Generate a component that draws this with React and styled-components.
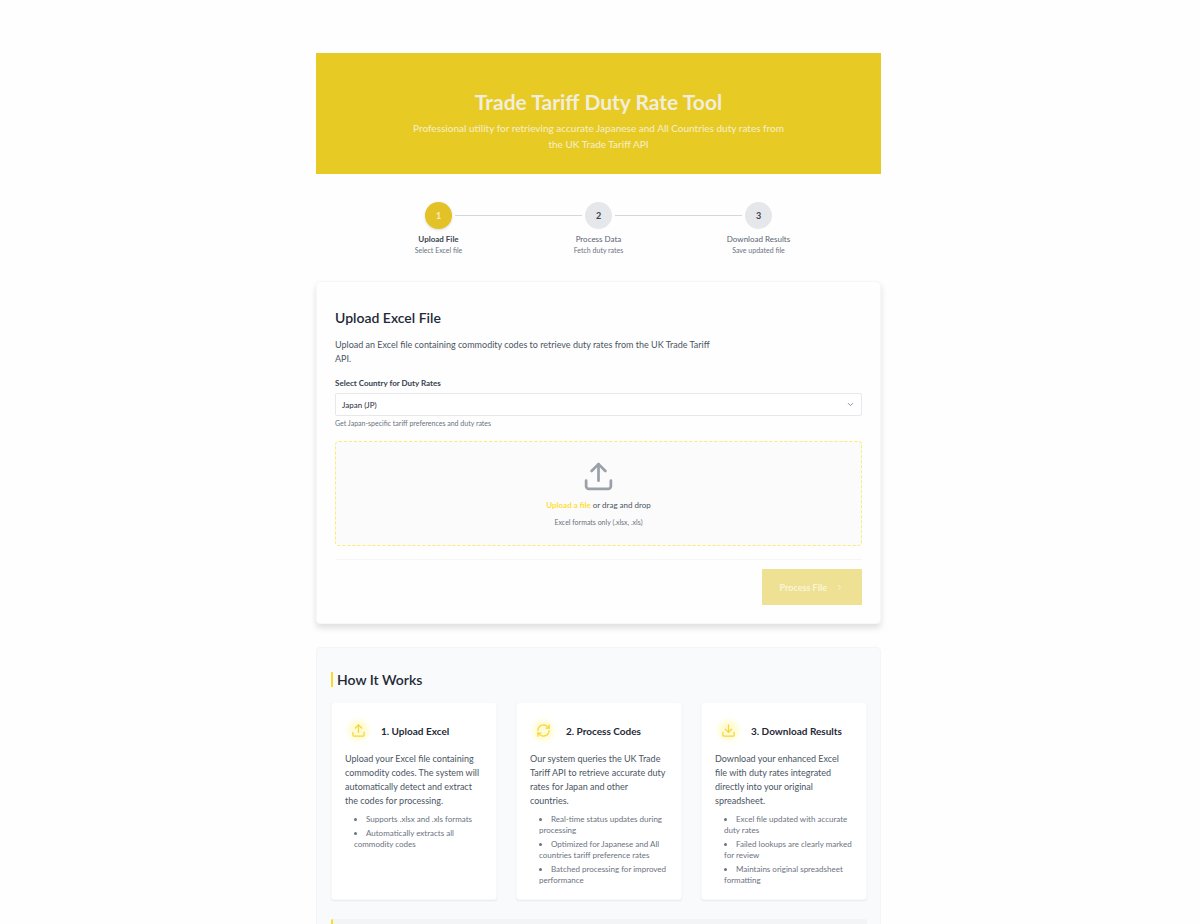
import React, { useState } from "react";
import styled, { createGlobalStyle, css } from "styled-components";
import {
  ChevronDown,
  ChevronRight,
  Download,
  RefreshCw,
  Upload,
} from "lucide-react";

const GlobalStyle = createGlobalStyle`
  *, *::before, *::after { box-sizing: border-box; }
  body {
    margin: 0;
    background: #fefefe;
    color: #1f2937;
    font-family: Lato, "Open Sans", sans-serif;
  }
  h1, h2, h3, p, ul, ol { margin: 0; padding: 0; }
`;

const Page = styled.main`
  padding: 53px 3px 0 0;
`;

const Container = styled.div`
  max-width: 565px;
  margin: 0 auto;
`;

const Banner = styled.header`
  background: #e8ca25;
  color: #f2eedd;
  padding: 36px 88px 22px;
  text-align: center;
`;

const BannerTitle = styled.h1`
  font-size: 21px;
  line-height: 26px;
  font-weight: 700;
  margin-bottom: 5px;
`;

const BannerText = styled.p`
  font-size: 10px;
  line-height: 16px;
  font-weight: 500;
  color: #f4edc4;
`;

const Steps = styled.ol`
  display: flex;
  list-style: none;
  justify-content: center;
  margin: 28px 42px 26px;
`;

const Step = styled.li`
  flex: 1;
  max-width: 160px;
  display: flex;
  flex-direction: column;
  align-items: center;
`;

const StepTrack = styled.div`
  align-self: stretch;
  display: flex;
  align-items: center;
  gap: 3px;
`;

const StepLine = styled.span`
  flex: 1;
  height: 1px;
  background: ${(p) => (p.$hidden ? "transparent" : "#d5d6d9")};
`;

const StepCircle = styled.span`
  width: 27px;
  height: 27px;
  border-radius: 50%;
  display: flex;
  align-items: center;
  justify-content: center;
  font-size: 9px;
  font-weight: 700;
  background: #e6e7ea;
  color: #3b4350;
  ${(p) =>
    p.$active &&
    css`
      background: #e3c228;
      color: #f6edc0;
      box-shadow: 0 1px 3px rgba(0, 0, 0, 0.15);
    `}
`;

const StepName = styled.span`
  margin-top: 4px;
  font-size: 8px;
  line-height: 12px;
  font-weight: ${(p) => (p.$active ? 700 : 400)};
  color: ${(p) => (p.$active ? "#3b4350" : "#5b6370")};
`;

const StepHint = styled.span`
  font-size: 7px;
  line-height: 10px;
  color: #6b7280;
`;

const Card = styled.section`
  background: #fefefe;
  border: 1px solid #f6f7f8;
  border-radius: 4px;
  padding: 27px 18px 18px;
  box-shadow: 0 4px 6px rgba(0, 0, 0, 0.12);
`;

const CardTitle = styled.h2`
  font-size: 14px;
  line-height: 18px;
  font-weight: 600;
  color: #1f2937;
`;

const CardText = styled.p`
  margin-top: 11px;
  max-width: 390px;
  font-size: 9px;
  line-height: 14px;
  color: #4b5563;
`;

const Label = styled.label`
  display: block;
  margin: 11px 0 4px;
  font-size: 8px;
  line-height: 12px;
  font-weight: 700;
  color: #374151;
`;

const SelectWrap = styled.div`
  position: relative;

  svg {
    position: absolute;
    right: 7px;
    top: 7px;
    color: #6b7280;
    pointer-events: none;
  }
`;

const Select = styled.select`
  appearance: none;
  display: block;
  width: 100%;
  height: 23px;
  padding: 0 20px 0 6px;
  border: 1px solid #e6e8eb;
  border-radius: 2px;
  background: #fff;
  color: #1f2937;
  font-family: inherit;
  font-size: 8px;
`;

const Hint = styled.p`
  margin-top: 2px;
  font-size: 7px;
  line-height: 11px;
  color: #6b7280;
`;

const DropZone = styled.div`
  margin-top: 12px;
  padding: 18px 0 17px;
  border: 1px dashed #fdec6e;
  border-radius: 4px;
  background: #fbfbfb;
  display: flex;
  flex-direction: column;
  align-items: center;
  color: #9ca0aa;
`;

const DropText = styled.p`
  margin-top: 5px;
  font-size: 8px;
  line-height: 14px;
  color: #4b5563;
`;

const UploadButton = styled.button`
  border: 0;
  padding: 0;
  background: none;
  font: inherit;
  font-weight: 700;
  color: #ffdf35;
  cursor: pointer;
`;

const DropHint = styled.p`
  margin-top: 4px;
  font-size: 7px;
  line-height: 12px;
  color: #6b7280;
`;

const CardFooter = styled.div`
  display: flex;
  justify-content: flex-end;
  margin-top: 13px;
  padding-top: 9px;
  border-top: 1px solid #f6f6f7;
`;

const ProcessButton = styled.button`
  display: flex;
  align-items: center;
  gap: 8px;
  height: 36px;
  padding: 0 18px;
  border: 0;
  border-radius: 1px;
  background: #efe193;
  color: #faf5d8;
  font-family: inherit;
  font-size: 9px;
  font-weight: 700;
`;

const HowSection = styled.section`
  margin-top: 23px;
  padding: 24px 13px 20px 14px;
  border: 1px solid #f3f5f7;
  border-radius: 4px;
  background: #f9fafc;
`;

const HowTitle = styled.h2`
  border-left: 2px solid #fadb2a;
  padding-left: 4px;
  font-size: 14px;
  line-height: 15px;
  font-weight: 600;
  color: #1f2937;
`;

const HowGrid = styled.div`
  display: grid;
  grid-template-columns: repeat(3, 1fr);
  gap: 19px;
  margin-top: 15px;
`;

const HowCard = styled.article`
  padding: 14px 13px 13px;
  border: 1px solid #f8f9fa;
  border-radius: 3px;
  background: #fff;
  box-shadow: 0 1px 2px rgba(0, 0, 0, 0.07);
`;

const HowHead = styled.div`
  display: flex;
  align-items: center;
  gap: 9px;
`;

const IconBadge = styled.span`
  width: 27px;
  height: 27px;
  border-radius: 50%;
  display: flex;
  align-items: center;
  justify-content: center;
  background: radial-gradient(circle, #fefbd2 30%, #fffffa 70%);
  color: #f5d53a;
`;

const HowName = styled.h3`
  font-size: 10px;
  line-height: 14px;
  font-weight: 700;
  color: #1f2937;
`;

const HowText = styled.p`
  margin-top: 8px;
  font-size: 9px;
  line-height: 14px;
  color: #4b5563;
`;

const HowList = styled.ul`
  margin-top: 6px;
  padding-left: 9px;
  list-style: disc inside;
  font-size: 8px;
  line-height: 11px;
  color: #6b7280;

  li + li {
    margin-top: 3px;
  }
`;

const Note = styled.aside`
  margin-top: 19px;
  height: 60px;
  border-left: 2px solid #fadb2a;
  border-radius: 2px;
  background: #f3f4f6;
`;

const steps = [
  { name: "Upload File", hint: "Select Excel file" },
  { name: "Process Data", hint: "Fetch duty rates" },
  { name: "Download Results", hint: "Save updated file" },
];

const howItWorks = [
  {
    Icon: Upload,
    name: "1. Upload Excel",
    text: "Upload your Excel file containing commodity codes. The system will automatically detect and extract the codes for processing.",
    points: [
      "Supports .xlsx and .xls formats",
      "Automatically extracts all commodity codes",
    ],
  },
  {
    Icon: RefreshCw,
    name: "2. Process Codes",
    text: "Our system queries the UK Trade Tariff API to retrieve accurate duty rates for Japan and other countries.",
    points: [
      "Real-time status updates during processing",
      "Optimized for Japanese and All countries tariff preference rates",
      "Batched processing for improved performance",
    ],
  },
  {
    Icon: Download,
    name: "3. Download Results",
    text: "Download your enhanced Excel file with duty rates integrated directly into your original spreadsheet.",
    points: [
      "Excel file updated with accurate duty rates",
      "Failed lookups are clearly marked for review",
      "Maintains original spreadsheet formatting",
    ],
  },
];

const App = () => {
  const [country, setCountry] = useState("JP");
  const current = 0;

  return (
    <Page>
      <GlobalStyle />
      <Container>
        <Banner>
          <BannerTitle>Trade Tariff Duty Rate Tool</BannerTitle>
          <BannerText>
            Professional utility for retrieving accurate Japanese and All
            Countries duty rates from
            <br />
            the UK Trade Tariff API
          </BannerText>
        </Banner>

        <Steps>
          {steps.map((step, index) => (
            <Step key={step.name}>
              <StepTrack>
                <StepLine $hidden={index === 0} />
                <StepCircle $active={index === current}>{index + 1}</StepCircle>
                <StepLine $hidden={index === steps.length - 1} />
              </StepTrack>
              <StepName $active={index === current}>{step.name}</StepName>
              <StepHint>{step.hint}</StepHint>
            </Step>
          ))}
        </Steps>

        <Card>
          <CardTitle>Upload Excel File</CardTitle>
          <CardText>
            Upload an Excel file containing commodity codes to retrieve duty
            rates from the UK Trade Tariff API.
          </CardText>
          <Label htmlFor="country">Select Country for Duty Rates</Label>
          <SelectWrap>
            <Select
              id="country"
              value={country}
              onChange={(e) => setCountry(e.target.value)}
            >
              <option value="JP">Japan (JP)</option>
              <option value="ALL">All Countries</option>
            </Select>
            <ChevronDown size={9} />
          </SelectWrap>
          <Hint>Get Japan-specific tariff preferences and duty rates</Hint>
          <DropZone>
            <Upload size={33} />
            <DropText>
              <UploadButton type="button">Upload a file</UploadButton> or drag
              and drop
            </DropText>
            <DropHint>Excel formats only (.xlsx, .xls)</DropHint>
          </DropZone>
          <CardFooter>
            <ProcessButton type="button" disabled>
              Process File
              <ChevronRight size={9} />
            </ProcessButton>
          </CardFooter>
        </Card>

        <HowSection>
          <HowTitle>How It Works</HowTitle>
          <HowGrid>
            {howItWorks.map(({ Icon, name, text, points }) => (
              <HowCard key={name}>
                <HowHead>
                  <IconBadge>
                    <Icon size={15} />
                  </IconBadge>
                  <HowName>{name}</HowName>
                </HowHead>
                <HowText>{text}</HowText>
                <HowList>
                  {points.map((point) => (
                    <li key={point}>{point}</li>
                  ))}
                </HowList>
              </HowCard>
            ))}
          </HowGrid>
          <Note />
        </HowSection>
      </Container>
    </Page>
  );
};

export default App;
